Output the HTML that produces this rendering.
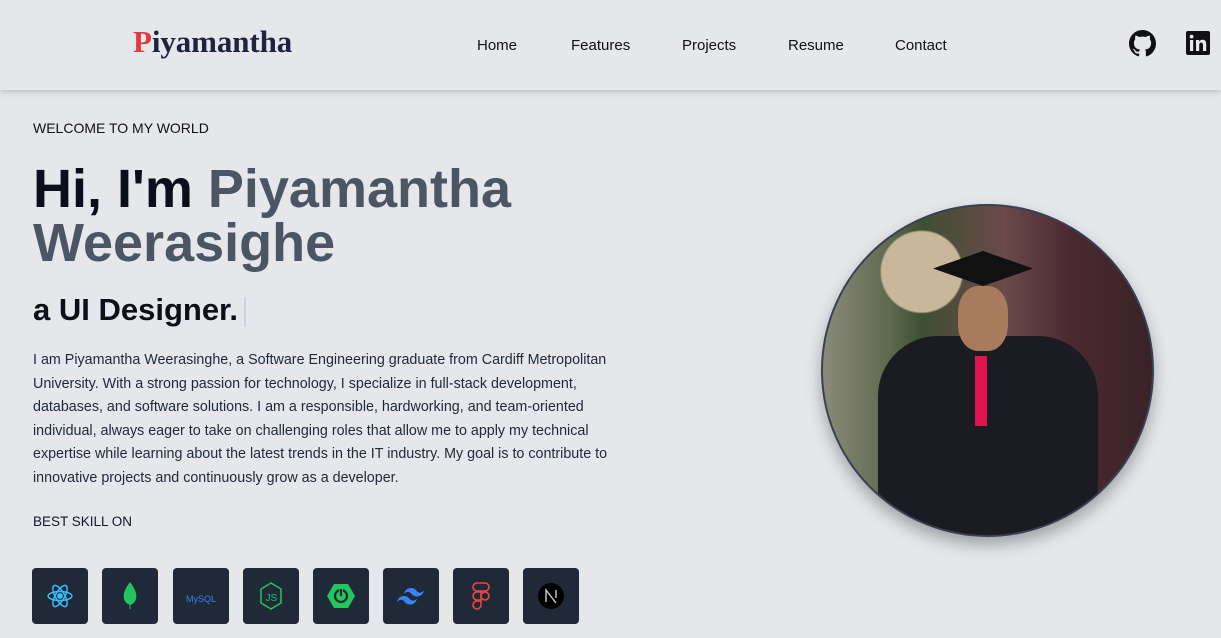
<!DOCTYPE html>
<html><head><meta charset="utf-8"><style>
*{margin:0;padding:0;box-sizing:border-box}
body{width:1221px;height:638px;overflow:hidden;background:#e5e7eb;font-family:"Liberation Sans",sans-serif;color:#111827;position:relative}
header{position:absolute;left:0;top:0;width:1221px;height:90px;background:#e5e7eb;box-shadow:0 2px 6px rgba(0,0,0,.18);z-index:2}
.logo{position:absolute;left:133px;top:24px;font-family:"Liberation Serif",serif;font-weight:bold;font-size:31px;color:#1e2340;letter-spacing:-0.1px}
.logo span{color:#e5383b}
nav{position:absolute;top:37px;left:0;font-size:15px;color:#111}
nav a{position:absolute;white-space:nowrap;color:#111;text-decoration:none}
.wel{position:absolute;left:33px;top:120px;font-size:14px;color:#111}
h1{position:absolute;left:33px;top:162px;font-size:54px;line-height:54px;font-weight:bold;color:#0b0f1a;white-space:nowrap}
h1 span{color:#4b5563}
h2{position:absolute;left:33px;top:292px;font-size:31px;font-weight:bold;color:#0b0f1a}
h2 i{display:inline-block;width:2px;height:30px;background:#cbd5e1;vertical-align:middle;margin-left:6px}
p.d{position:absolute;left:33px;top:349px;font-size:14.3px;line-height:23.5px;color:#1f2937;white-space:nowrap}
.best{position:absolute;left:33px;top:514px;font-size:13.5px}
.ic{position:absolute;top:568px;width:56px;height:56px;background:#1f2937;border-radius:4px;display:flex;align-items:center;justify-content:center}
.photo{position:absolute;left:821px;top:204px;width:333px;height:333px;border-radius:50%;border:2px solid #374151;box-shadow:0 8px 16px rgba(0,0,0,.3);overflow:hidden;
background:radial-gradient(circle at 30% 20%,#c8b79a 0 40px,transparent 42px),linear-gradient(90deg,#8a8a7a 0%,#5f6a4e 20%,#3e4f33 30%,#6a4a4a 55%,#4a2a30 75%,#3a2228 100%)}
.gown{position:absolute;left:55px;top:130px;width:220px;height:220px;background:#1a1c22;border-radius:60px 60px 0 0}
.face{position:absolute;left:135px;top:80px;width:50px;height:65px;background:#a87a5e;border-radius:40%}
.cap{position:absolute;left:110px;top:45px;width:100px;height:35px;background:#111;clip-path:polygon(50% 0,100% 50%,50% 100%,0 50%)}
.tie{position:absolute;left:152px;top:150px;width:12px;height:70px;background:#e0144f}
</style></head><body>
<header>
<div class="logo"><span>P</span>iyamantha</div>
<nav><a style="left:477px">Home</a><a style="left:571px">Features</a><a style="left:682px">Projects</a><a style="left:788px">Resume</a><a style="left:895px">Contact</a></nav>
<svg style="position:absolute;left:1129px;top:30px" width="27" height="27" viewBox="0 0 16 16"><path fill="#111" d="M8 0C3.58 0 0 3.58 0 8c0 3.54 2.29 6.53 5.47 7.59.4.07.55-.17.55-.38v-1.33c-2.23.48-2.7-1.07-2.7-1.07-.36-.92-.89-1.17-.89-1.17-.73-.5.06-.49.06-.49.8.06 1.23.83 1.23.83.71 1.22 1.87.87 2.33.66.07-.52.28-.87.51-1.07-1.78-.2-3.64-.89-3.64-3.95 0-.87.31-1.59.82-2.15-.08-.2-.36-1.02.08-2.12 0 0 .67-.21 2.2.82.64-.18 1.32-.27 2-.27.68 0 1.36.09 2 .27 1.53-1.04 2.2-.82 2.2-.82.44 1.1.16 1.92.08 2.12.51.56.82 1.27.82 2.15 0 3.07-1.87 3.75-3.65 3.95.29.25.54.73.54 1.48v2.2c0 .21.15.46.55.38A8.01 8.01 0 0016 8c0-4.42-3.58-8-8-8z"/></svg>
<svg style="position:absolute;left:1186px;top:31px" width="24" height="24" viewBox="0 0 24 24"><rect width="24" height="24" rx="2" fill="#111"/><rect x="4" y="9" width="3.2" height="11" fill="#e5e7eb"/><circle cx="5.6" cy="5.6" r="1.9" fill="#e5e7eb"/><path d="M10 9h3v1.6c.6-1 1.8-1.9 3.6-1.9 3 0 3.6 2 3.6 4.6V20h-3.2v-5.7c0-1.4-.2-2.7-1.8-2.7s-2 1.2-2 2.6V20H10z" fill="#e5e7eb"/></svg>
</header>
<div class="wel">WELCOME TO MY WORLD</div>
<h1>Hi, I'm <span>Piyamantha<br>Weerasighe</span></h1>
<h2>a UI Designer.<i></i></h2>
<p class="d">I am Piyamantha Weerasinghe, a Software Engineering graduate from Cardiff Metropolitan<br>University. With a strong passion for technology, I specialize in full-stack development,<br>databases, and software solutions. I am a responsible, hardworking, and team-oriented<br>individual, always eager to take on challenging roles that allow me to apply my technical<br>expertise while learning about the latest trends in the IT industry. My goal is to contribute to<br>innovative projects and continuously grow as a developer.</p>
<div class="best">BEST SKILL ON</div>
<div class="ic" style="left:32px"><svg width="26" height="26" viewBox="-12 -12 24 24" fill="none" stroke="#38bdf8" stroke-width="1.4"><ellipse rx="11" ry="4.2"/><ellipse rx="11" ry="4.2" transform="rotate(60)"/><ellipse rx="11" ry="4.2" transform="rotate(120)"/><circle r="2" fill="#38bdf8"/></svg></div>
<div class="ic" style="left:102px"><svg width="14" height="28" viewBox="0 0 14 28"><path d="M7 0C2 7 0 11 1 17c1 3 3 5 6 6 3-1 5-3 6-6 1-6-1-10-6-17z" fill="#22c55e"/><path d="M7 20v7" stroke="#22c55e"/></svg></div>
<div class="ic" style="left:173px"><span style="color:#3b82f6;font-size:9px;margin-top:6px">MySQL</span></div>
<div class="ic" style="left:243px"><svg width="24" height="28" viewBox="0 0 24 28" fill="none" stroke="#22c55e" stroke-width="1.5"><path d="M12 1l10 6v14l-10 6-10-6V7z"/><text x="6.5" y="19" font-size="10" fill="#22c55e" stroke="none" font-family="Liberation Sans">JS</text></svg></div>
<div class="ic" style="left:313px"><svg width="28" height="26" viewBox="0 0 28 26"><path d="M7 1h14l7 12-7 12H7L0 13z" fill="#22c55e"/><circle cx="14" cy="13" r="6" fill="none" stroke="#1f2937" stroke-width="2.2"/><path d="M14 5v8" stroke="#22c55e" stroke-width="4"/><path d="M14 6v7" stroke="#1f2937" stroke-width="2.2"/></svg></div>
<div class="ic" style="left:383px"><svg width="28" height="18" viewBox="0 0 28 18" fill="#3b82f6"><path d="M7 7c1-4 3.5-6 7-6 5 0 5.5 4 8 4.5 2 .5 3.5-.5 5-2-1 4-3.5 6-7 6-5 0-5.5-4-8-4.5-2-.5-3.5.5-5 2zM0 15c1-4 3.5-6 7-6 5 0 5.5 4 8 4.5 2 .5 3.5-.5 5-2-1 4-3.5 6-7 6-5 0-5.5-4-8-4.5-2-.5-3.5.5-5 2z"/></svg></div>
<div class="ic" style="left:453px"><svg width="18" height="28" viewBox="0 0 18 28" fill="none" stroke="#ef4444" stroke-width="1.6"><path d="M1 5a4 4 0 014-4h8a4 4 0 010 8H5A4 4 0 011 5zM1 14a4 4 0 014-4h4v8H5a4 4 0 01-4-4zM1 23a4 4 0 014-4h4v4a4 4 0 01-8 0z"/><circle cx="13" cy="14" r="4"/></svg></div>
<div class="ic" style="left:523px"><svg width="28" height="28" viewBox="0 0 28 28"><circle cx="14" cy="14" r="13" fill="#000"/><path d="M9 20V8l10 13M19 8v8" stroke="#ccc" stroke-width="1.4" fill="none"/></svg></div>
<div class="photo"><div class="gown"></div><div class="face"></div><div class="cap"></div><div class="tie"></div></div>
</body></html>
